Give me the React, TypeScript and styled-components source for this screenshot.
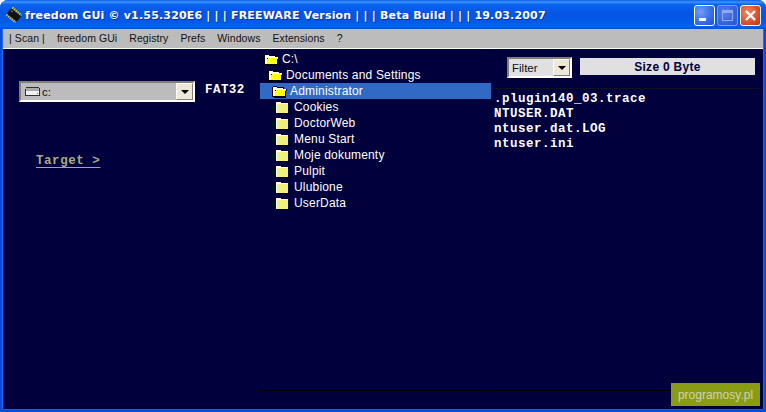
import React from "react";
import styled, { createGlobalStyle } from "styled-components";

const Global = createGlobalStyle`
  html, body { margin: 0; padding: 0; background: #fff; }
  #root { width: 766px; height: 412px; overflow: hidden; }
`;

const Win = styled.div`
  width: 766px; height: 412px; box-sizing: border-box; display: flex; flex-direction: column;
  background: #0a4bd8; border-radius: 8px 8px 0 0; overflow: hidden; position: relative;
  padding-bottom: 3px;
`;
const TitleBar = styled.div`
  height: 29px; flex: none; display: flex; align-items: center; box-sizing: border-box; padding: 0 5px 0 5px;
  background: linear-gradient(180deg, #0a5be8 0%, #3f94fb 7%, #0a63ee 15%, #0556e4 45%, #0359e8 75%, #0663f2 90%, #0450d0 100%);
`;
const ChipIcon = styled.svg`width: 18px; height: 18px; flex: none; margin-right: 2px;`;
const TitleText = styled.div`
  font: bold 11px "DejaVu Sans", sans-serif; color: #fff; white-space: pre; letter-spacing: 0.18px;
  text-shadow: 1px 1px 0 #0a2f9a; flex: 1; margin-top: 1px;
`;
const Buttons = styled.div`display: flex; gap: 2px; margin-top: 1px;`;
const WinBtn = styled.div<{ $kind: "min" | "max" | "close" }>`
  width: 21px; height: 21px; box-sizing: border-box; border: 1px solid ${p => p.$kind === "max" ? "#7f9ef0" : "#fff"}; border-radius: 3px;
  display: flex; align-items: center; justify-content: center;
  background: ${p => p.$kind === "close"
    ? "radial-gradient(circle at 35% 35%, #ee8a66, #d9502a 60%, #b8360f)"
    : p.$kind === "max"
      ? "radial-gradient(circle at 35% 35%, #5a80ea, #2f5fdc 70%, #2a52c8)"
      : "radial-gradient(circle at 30% 30%, #6f9cf6, #2f68e8 65%, #2450cc)"};
`;
const BtnIcon = styled.svg`width: 19px; height: 19px; display: block;`;
const Content = styled.div`
  flex: 1; margin: 0 3px; display: flex; flex-direction: column; min-height: 0;
  box-shadow: -1px 0 0 #1a6cff, 1px 0 0 #1a6cff, 0 1px 0 #1a5cf0;
`;
const MenuBar = styled.div`
  flex: none; background: #bcbcbc; border-bottom: 1px solid #fff; display: flex; align-items: center;
  font: 10.5px "Liberation Sans", sans-serif; color: #111; padding: 0 0 1px 6px; gap: 12px; height: 18px; letter-spacing: 0.08px;
`;
const MenuItem = styled.span`white-space: pre;`;
const Body = styled.div`flex: 1; background: #00003c; display: flex; align-items: flex-start; min-height: 0;`;
const LeftPane = styled.div`
  width: 256px; flex: none; display: flex; flex-direction: column; padding: 32px 0 0 16px; box-sizing: border-box;
`;
const DriveRow = styled.div`display: flex; align-items: center; gap: 10px;`;
const Combo = styled.div<{ $w: number; $bg: string }>`
  width: ${p => p.$w}px; height: 21px; box-sizing: border-box; background: ${p => p.$bg};
  border: 2px solid; border-color: #808078 #fff #fff #808078; display: flex; align-items: center;
  font: 11.5px "Liberation Sans", sans-serif; color: #111;
`;
const ComboValue = styled.span`flex: 1; display: flex; align-items: center; gap: 1px; padding-left: 3px;`;
const ComboBtn = styled.div`
  width: 17px; height: 17px; background: #ece9d8; flex: none; box-sizing: border-box;
  border: 1px solid; border-color: #fff #808078 #808078 #fff; display: flex; align-items: center; justify-content: center;
`;
const Arrow = styled.div`width: 0; height: 0; border-left: 4px solid transparent; border-right: 4px solid transparent; border-top: 4px solid #000;`;
const Mono = styled.span`font: bold 12.5px "Liberation Mono", monospace; letter-spacing: 0.5px;`;
const FsLabel = styled(Mono)`color: #fff; margin-top: -4px; letter-spacing: 0.45px;`;
const TargetLink = styled(Mono)`
  color: #a8a890; text-decoration: underline; text-underline-offset: 3px; margin: 52px 0 0 17px; letter-spacing: 0.55px; align-self: flex-start;
`;
const TreePane = styled.div`
  width: 233px; height: 342px; flex: none; box-sizing: border-box; border-left: 1px solid #000; border-right: 1px solid #000;
  border-bottom: 1px solid #000; padding-top: 2px; display: flex; flex-direction: column;
`;
const TreeRow = styled.div<{ $indent: number; $selected?: boolean }>`
  height: 16px; flex: none; display: flex; align-items: center; padding-left: ${p => p.$indent}px;
  background: ${p => (p.$selected ? "#316ac5" : "transparent")};
  font: 12px "Liberation Sans", sans-serif; color: #fff; white-space: pre;
`;
const TreeLabel = styled.span<{ $gap: number }>`margin-left: ${p => p.$gap}px; letter-spacing: 0.18px;`;
const FolderSvg = styled.svg`width: 15px; height: 13px; flex: none; display: block;`;
const RightPane = styled.div`
  width: 268px; height: 342px; flex: none; box-sizing: border-box; border-bottom: 1px solid #000; display: flex; flex-direction: column;
`;
const RightTop = styled.div`
  height: 40px; flex: none; box-sizing: border-box; border-bottom: 1px solid #101020; display: flex; align-items: flex-start; padding: 8px 0 0 15px; gap: 8px;
`;
const SizeBox = styled.span`
  width: 175px; height: 17px; margin-top: 1px; background: #e0e0e0; color: #00003c; display: flex; align-items: center; justify-content: center;
  font: bold 12px "Liberation Sans", sans-serif; letter-spacing: 0.3px;
`;
const FileList = styled.div`display: flex; flex-direction: column; padding: 3px 0 0 2px;`;
const FileRow = styled(Mono)`height: 15px; line-height: 15px; color: #fff; white-space: pre; letter-spacing: 0.5px;`;
const Watermark = styled.div`
  position: absolute; left: 671px; top: 383px; width: 89px; height: 23px; background: #8a9c14;
  color: #ccd2b4; font: 12px "Liberation Sans", sans-serif; display: flex; align-items: center; justify-content: center;
`;

const dither = (x0: number, y0: number, x1: number, y1: number) => {
  let d = "";
  for (let y = y0; y < y1; y++) for (let x = x0; x < x1; x++) if ((x + y) % 2 === 0) d += `M${x} ${y}h1v1h-1z`;
  return d;
};

const Closed = () => (
  <FolderSvg viewBox="0 0 15 13" shapeRendering="crispEdges">
    <path d="M2 2h6v1h6v10H2z" fill="#000" />
    <path d="M1 1h5v1h7v10H1z" fill="#fff" />
    <path d="M2 3h11v9H2z" fill="#ffff00" />
    <path d={dither(2, 3, 13, 12)} fill="#f4f480" />
  </FolderSvg>
);
const Open = () => (
  <FolderSvg viewBox="0 0 15 13" shapeRendering="crispEdges">
    <path d="M0 2h1V1h4v1h7v2h3v2h-1v7H2v-1H0z" fill="#000" />
    <path d="M1 2h4v1h6v1H4v1H3v5H2v1H1z" fill="#fff" />
    <path d="M4 5h10v1h-1v5H2v-1h1V6h1z" fill="#ffff00" />
    <path d={dither(4, 6, 13, 11)} fill="#f4f480" />
    <path d="M4 4h10v1H4z" fill="#fff" />
  </FolderSvg>
);

const treeRows = [
  { t: "C:\\", i: 4, g: 3, open: true },
  { t: "Documents and Settings", i: 8, g: 3, open: true },
  { t: "Administrator", i: 12, g: 3, open: true, sel: true },
  { t: "Cookies", i: 15, g: 4 },
  { t: "DoctorWeb", i: 15, g: 4 },
  { t: "Menu Start", i: 15, g: 4 },
  { t: "Moje dokumenty", i: 15, g: 4 },
  { t: "Pulpit", i: 15, g: 4 },
  { t: "Ulubione", i: 15, g: 4 },
  { t: "UserData", i: 15, g: 4 },
];
const menus = ["| Scan |", "freedom GUi", "Registry", "Prefs", "Windows", "Extensions", "?"];
const files = [".plugin140_03.trace", "NTUSER.DAT", "ntuser.dat.LOG", "ntuser.ini"];

export default function App() {
  return (
    <Win>
      <Global />
      <TitleBar>
        <ChipIcon viewBox="0 0 18 18">
          <g transform="rotate(40 9 9)">
            <path d="M3 4.5h12M3 13.5h12" stroke="#e8d020" strokeWidth="2.4" strokeDasharray="1.3 1" />
            <rect x="2.5" y="5.5" width="13" height="7" fill="#111" />
            <rect x="4" y="6.5" width="2" height="2" fill="#555" />
          </g>
        </ChipIcon>
        <TitleText>{"freedom GUi © v1.55.320E6 | | | FREEWARE Version | | | Beta Build | | | 19.03.2007"}</TitleText>
        <Buttons>
          <WinBtn $kind="min">
            <BtnIcon viewBox="0 0 19 19" shapeRendering="crispEdges"><rect x="4" y="12" width="7" height="3" fill="#fff" /></BtnIcon>
          </WinBtn>
          <WinBtn $kind="max">
            <BtnIcon viewBox="0 0 19 19" shapeRendering="crispEdges"><path d="M4 4h11v11H4z M5 7v7h9V7z" fill="#8fa8ee" fillRule="evenodd" /></BtnIcon>
          </WinBtn>
          <WinBtn $kind="close">
            <BtnIcon viewBox="0 0 19 19"><path d="M5 5l9 9M14 5l-9 9" stroke="#fff" strokeWidth="2.4" /></BtnIcon>
          </WinBtn>
        </Buttons>
      </TitleBar>
      <Content>
        <MenuBar>
          {menus.map(m => <MenuItem key={m}>{m}</MenuItem>)}
        </MenuBar>
        <Body>
          <LeftPane>
            <DriveRow>
              <Combo $w={176} $bg="#bcbcbc">
                <ComboValue>
                  <svg width="17" height="11" viewBox="0 0 17 11" shapeRendering="crispEdges">
                    <path d="M1 3h1V1h13v1h1v8H1z" fill="#303030" />
                    <path d="M2 2h13v3H2z" fill="#a8a8a8" />
                    <path d="M2 5h13v4H2z" fill="#f0f0f0" />
                    <path d="M13 7h1v1h-1z" fill="#20c020" />
                  </svg>
                  c:
                </ComboValue>
                <ComboBtn><Arrow /></ComboBtn>
              </Combo>
              <FsLabel>FAT32</FsLabel>
            </DriveRow>
            <TargetLink>{"Target >"}</TargetLink>
          </LeftPane>
          <TreePane>
            {treeRows.map(r => (
              <TreeRow key={r.t} $indent={r.i} $selected={r.sel}>
                {r.open ? <Open /> : <Closed />}
                <TreeLabel $gap={r.g}>{r.t}</TreeLabel>
              </TreeRow>
            ))}
          </TreePane>
          <RightPane>
            <RightTop>
              <Combo $w={65} $bg="#e0e0e0">
                <ComboValue>Filter</ComboValue>
                <ComboBtn><Arrow /></ComboBtn>
              </Combo>
              <SizeBox>Size 0 Byte</SizeBox>
            </RightTop>
            <FileList>
              {files.map(f => <FileRow key={f}>{f}</FileRow>)}
            </FileList>
          </RightPane>
        </Body>
      </Content>
      <Watermark>programosy.pl</Watermark>
    </Win>
  );
}
